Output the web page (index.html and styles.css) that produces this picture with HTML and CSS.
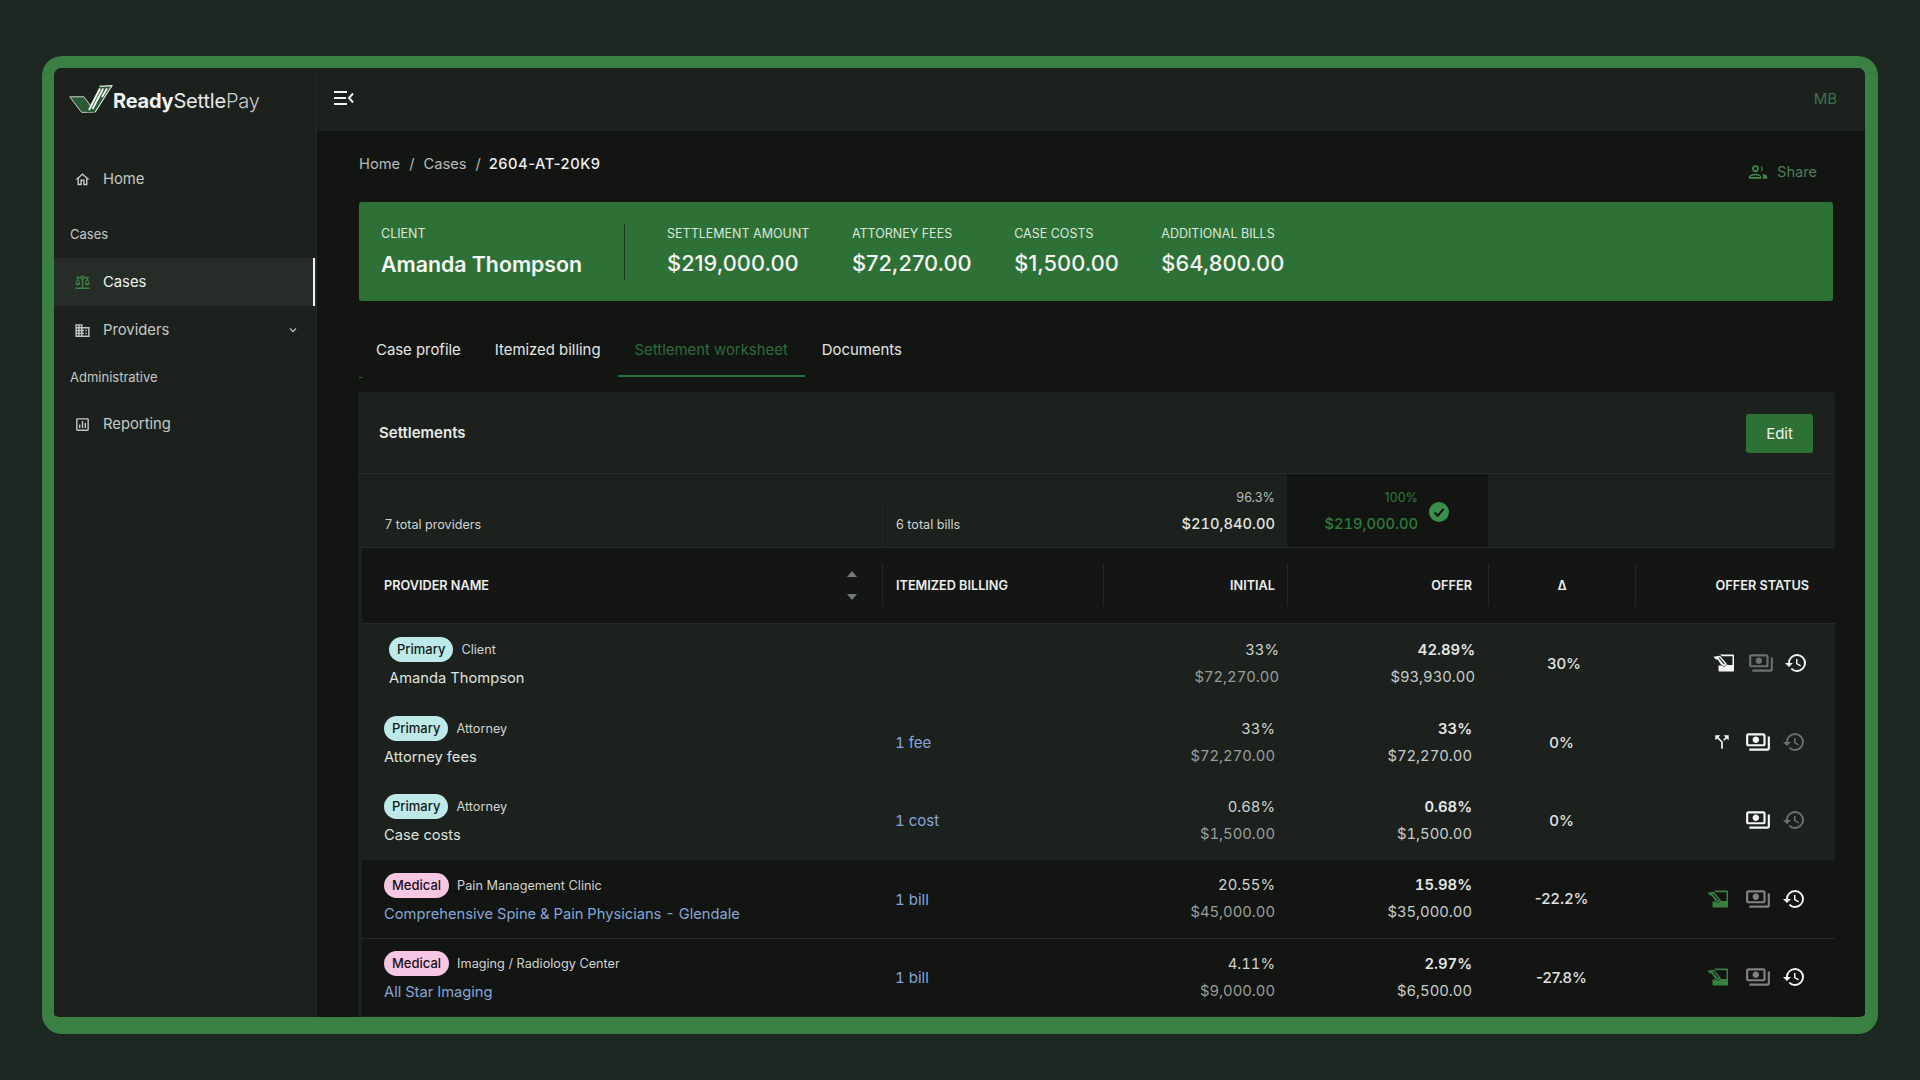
FILE: index.html
```html
<!DOCTYPE html>
<html lang="en">
<head>
<meta charset="utf-8">
<title>ReadySettlePay</title>
<link rel="stylesheet" href="styles.css">
</head>
<body>
<svg class="defs" aria-hidden="true">
  <symbol id="i-history" viewBox="0 0 24 24"><path fill="currentColor" d="M13 3a9 9 0 0 0-9 9H1l3.89 3.89.07.14L9 12H6c0-3.87 3.13-7 7-7s7 3.13 7 7-3.13 7-7 7c-1.93 0-3.68-.79-4.94-2.06l-1.42 1.42A8.954 8.954 0 0 0 13 21a9 9 0 0 0 0-18zm-1 5v5l4.28 2.54.72-1.21-3.5-2.08V8H12z"/></symbol>
  <symbol id="i-money" viewBox="0 0 24 24"><path fill="currentColor" d="M19 14V6c0-1.1-.9-2-2-2H3c-1.1 0-2 .9-2 2v8c0 1.1.9 2 2 2h14c1.1 0 2-.9 2-2zm-2 0H3V6h14v8zm-7-7c-1.66 0-3 1.34-3 3s1.34 3 3 3 3-1.34 3-3-1.34-3-3-3zm13 0v11c0 1.1-.9 2-2 2H4v-2h17V7h2z"/></symbol>
  <symbol id="i-fork" viewBox="0 0 24 24"><path fill="currentColor" d="M14 4l2.29 2.29-2.88 2.88 1.42 1.42 2.88-2.88L20 10V4h-6zm-4 0H4v6l2.29-2.29 4.71 4.7V20h2v-8.41l-5.29-5.3L10 4z"/></symbol>
  <symbol id="i-sign" viewBox="0 0 22 18"><path fill="currentColor" d="M7 .4h13.200a.8.8 0 0 1 .8.8v15.600a.8.8 0 0 1-.8.8H6.500a1 1 0 0 1-1-1v-5h3.300l2.400 1.500 2.900-2.800.7.7h4.700V2.300H8.800L7 .4z"/><path fill="currentColor" fill-rule="evenodd" d="M.3 2.700 7 1.700l6.800 8.200-2.600 2.500-3.400-2.100-3.100-4.800-1.600.1L.3 2.700zm5 .9 5.700 7 .8-.8-5.200-6.400-1.300.2z"/></symbol>
</svg>
<div class="frame">
  <aside class="sidebar">
    <div class="logo">
      <svg class="logo-mark" viewBox="0 0 44 28" aria-hidden="true">
        <path d="M.8 11.800h14l5.600 7.200 4.500 8.300H12.500z" fill="#2b5b35" stroke="#dfe4df" stroke-width=".9"/>
        <path d="M30.500 1.400 43 .6 26 27.300H17.800z" fill="#2b5b35"/>
        <path d="M30.500 1.400 43 .6 26 27.300" fill="none" stroke="#e8ece8" stroke-width="1.100"/>
        <path d="M31 3.500 20 25M34.200 3.500 23.500 24M38 3.500 33 12" fill="none" stroke="#f2f5f2" stroke-width="1.900"/>
      </svg>
      <span class="logo-text"><b>Ready</b><span class="reg">Settle</span><span class="lt">Pay</span></span>
    </div>
    <nav class="nav">
      <a class="nav-item">
        <svg class="nav-ico" viewBox="0 0 24 24"><path fill="currentColor" d="M12 5.690l5 4.500V18h-2v-6H9v6H7v-7.810l5-4.500M12 3L2 12h3v8h6v-6h2v6h6v-8h3L12 3z"/></svg>
        <span>Home</span>
      </a>
      <div class="nav-label first">Cases</div>
      <a class="nav-item active">
        <svg class="nav-ico green" viewBox="0 0 24 24"><path fill="currentColor" d="M13 7.830c.85-.3 1.530-.98 1.830-1.830H18l-3 7c0 1.660 1.570 3 3.500 3s3.500-1.340 3.500-3l-3-7h2V4h-6.170c-.41-1.170-1.520-2-2.830-2s-2.420.83-2.830 2H3v2h2l-3 7c0 1.660 1.570 3 3.500 3S9 14.660 9 13L6 6h3.170c.3.85.98 1.530 1.830 1.830V19H2v2h20v-2h-9V7.830zM20.370 13h-3.740l1.870-4.360L20.370 13zm-13 0H3.630L5.500 8.640 7.370 13zM12 6c-.55 0-1-.45-1-1s.45-1 1-1 1 .45 1 1-.45 1-1 1z"/></svg>
        <span class="strong">Cases</span>
      </a>
      <a class="nav-item">
        <svg class="nav-ico" viewBox="0 0 24 24"><path fill="currentColor" d="M12 7V3H2v18h20V7H12zM6 19H4v-2h2v2zm0-4H4v-2h2v2zm0-4H4V9h2v2zm0-4H4V5h2v2zm4 12H8v-2h2v2zm0-4H8v-2h2v2zm0-4H8V9h2v2zm0-4H8V5h2v2zm10 12h-8v-2h2v-2h-2v-2h2v-2h-2V9h8v10zm-2-8h-2v2h2v-2zm0 4h-2v2h2v-2z"/></svg>
        <span>Providers</span>
        <svg class="chev" viewBox="0 0 10 6"><path d="M2 1.500 5 4.500 8 1.500" fill="none" stroke="currentColor" stroke-width="1.400"/></svg>
      </a>
      <div class="nav-label">Administrative</div>
      <a class="nav-item">
        <svg class="nav-ico" viewBox="0 0 24 24"><path fill="currentColor" d="M19 3H5c-1.100 0-2 .9-2 2v14c0 1.100.9 2 2 2h14c1.100 0 2-.9 2-2V5c0-1.100-.9-2-2-2zm0 16H5V5h14v14zM7 12h2v5H7zm4-5h2v10h-2zm4 3h2v7h-2z"/></svg>
        <span>Reporting</span>
      </a>
    </nav>
  </aside>
  <div class="main">
    <header class="topbar">
      <svg class="menu" viewBox="0 0 20 16" aria-hidden="true"><path d="M0 2h13M0 8h12M0 14h13M19 3.500 15 8l4 4.500" fill="none" stroke="#f2f4f2" stroke-width="2"/></svg>
      <span class="user">MB</span>
    </header>
    <div class="content">
      <div class="crumbs-row">
        <div class="crumbs"><span>Home</span><i>/</i><span>Cases</span><i>/</i><b>2604-AT-20K9</b></div>
        <div class="share">
          <svg class="share-ico" viewBox="0 0 24 24"><path fill="currentColor" d="M9 4a4 4 0 1 1 0 8 4 4 0 0 1 0-8zm0 2a2 2 0 1 0 0 4 2 2 0 0 0 0-4zM15 4.200a4 4 0 0 1 0 7.600c.8-1 1.200-2.300 1.200-3.800S15.800 5.200 15 4.200zM9 14c3.700 0 7 1.700 7 4v2H1v-2c0-2.300 4.300-4 8-4zm0 2c-2.700 0-5.300 1-6 2h12c-.7-1-3.300-2-6-2zM17 14.200c3 .4 6 1.700 6 3.800v2h-5v-2.500c0-1.300-.4-2.400-1-3.300z"/></svg>
          <span>Share</span>
        </div>
      </div>
      <section class="summary-card">
        <div class="client-block">
          <div class="stat-label">CLIENT</div>
          <div class="client-name">Amanda Thompson</div>
        </div>
        <div class="stats">
          <div><div class="stat-label">SETTLEMENT AMOUNT</div><div class="stat-value">$219,000.00</div></div>
          <div><div class="stat-label">ATTORNEY FEES</div><div class="stat-value">$72,270.00</div></div>
          <div><div class="stat-label">CASE COSTS</div><div class="stat-value">$1,500.00</div></div>
          <div><div class="stat-label">ADDITIONAL BILLS</div><div class="stat-value">$64,800.00</div></div>
        </div>
      </section>
      <nav class="tabs">
        <a class="tab">Case profile</a>
        <a class="tab">Itemized billing</a>
        <a class="tab active">Settlement worksheet</a>
        <a class="tab">Documents</a>
      </nav>
      <section class="panel">
        <div class="panel-head">
          <h2>Settlements</h2>
          <button class="btn">Edit</button>
        </div>
        <div class="trow totals">
          <div class="tot first">7 total providers</div>
          <div class="tot sep">6 total bills</div>
          <div class="tot num sep"><span class="small">96.3%</span><b>$210,840.00</b></div>
          <div class="tot-offer">
            <div class="tot num"><span class="small">100%</span><b>$219,000.00</b></div>
            <svg class="ok" viewBox="0 0 20 20" aria-hidden="true"><circle cx="10" cy="10" r="10" fill="#3a8f4a"/><path d="M5.500 10.500 8.700 13.700 14.700 6.800" fill="none" stroke="#10140f" stroke-width="2"/></svg>
          </div>
        </div>
        <div class="trow thead">
          <div class="th first">PROVIDER NAME
            <span class="sort"><svg viewBox="0 0 10 6"><path d="M5 0 10 6H0z"/></svg><svg viewBox="0 0 10 6"><path d="M0 0H10L5 6z"/></svg></span>
          </div>
          <div class="th sep">ITEMIZED BILLING</div>
          <div class="th sep end">INITIAL</div>
          <div class="th sep end offer">OFFER</div>
          <div class="th sep mid">Δ</div>
          <div class="th sep end status">OFFER STATUS</div>
        </div>

        <div class="trow row row-client">
          <div class="td name"><div class="tags"><span class="badge primary">Primary</span><span class="kind">Client</span></div><div class="who">Amanda Thompson</div></div>
          <div class="td"></div>
          <div class="td num"><span>33%</span><span class="dim">$72,270.00</span></div>
          <div class="td num offer"><b>42.89%</b><span>$93,930.00</span></div>
          <div class="td delta">30%</div>
          <div class="td icons">
            <svg class="ico sign"><use href="#i-sign"/></svg>
            <svg class="ico money off"><use href="#i-money"/></svg>
            <svg class="ico hist"><use href="#i-history"/></svg>
          </div>
        </div>

        <div class="trow row">
          <div class="td name"><div class="tags"><span class="badge primary">Primary</span><span class="kind">Attorney</span></div><div class="who">Attorney fees</div></div>
          <div class="td"><a class="link">1 fee</a></div>
          <div class="td num"><span>33%</span><span class="dim">$72,270.00</span></div>
          <div class="td num offer"><b>33%</b><span>$72,270.00</span></div>
          <div class="td delta">0%</div>
          <div class="td icons">
            <svg class="ico fork"><use href="#i-fork"/></svg>
            <svg class="ico money"><use href="#i-money"/></svg>
            <svg class="ico hist off"><use href="#i-history"/></svg>
          </div>
        </div>

        <div class="trow row">
          <div class="td name"><div class="tags"><span class="badge primary">Primary</span><span class="kind">Attorney</span></div><div class="who">Case costs</div></div>
          <div class="td"><a class="link">1 cost</a></div>
          <div class="td num"><span>0.68%</span><span class="dim">$1,500.00</span></div>
          <div class="td num offer"><b>0.68%</b><span>$1,500.00</span></div>
          <div class="td delta">0%</div>
          <div class="td icons">
            <svg class="ico money"><use href="#i-money"/></svg>
            <svg class="ico hist off"><use href="#i-history"/></svg>
          </div>
        </div>

        <div class="trow row dark">
          <div class="td name"><div class="tags"><span class="badge medical">Medical</span><span class="kind">Pain Management Clinic</span></div><a class="link who">Comprehensive Spine &amp; Pain Physicians - Glendale</a></div>
          <div class="td"><a class="link">1 bill</a></div>
          <div class="td num"><span>20.55%</span><span class="dim">$45,000.00</span></div>
          <div class="td num offer"><b>15.98%</b><span>$35,000.00</span></div>
          <div class="td delta">-22.2%</div>
          <div class="td icons">
            <svg class="ico sign on"><use href="#i-sign"/></svg>
            <svg class="ico money off2"><use href="#i-money"/></svg>
            <svg class="ico hist"><use href="#i-history"/></svg>
          </div>
        </div>

        <div class="trow row dark lined">
          <div class="td name"><div class="tags"><span class="badge medical">Medical</span><span class="kind">Imaging / Radiology Center</span></div><a class="link who">All Star Imaging</a></div>
          <div class="td"><a class="link">1 bill</a></div>
          <div class="td num"><span>4.11%</span><span class="dim">$9,000.00</span></div>
          <div class="td num offer"><b>2.97%</b><span>$6,500.00</span></div>
          <div class="td delta">-27.8%</div>
          <div class="td icons">
            <svg class="ico sign on"><use href="#i-sign"/></svg>
            <svg class="ico money off2"><use href="#i-money"/></svg>
            <svg class="ico hist"><use href="#i-history"/></svg>
          </div>
        </div>
      </section>
    </div>
  </div>
</div>
</body>
</html>
```

FILE: styles.css
```css
* { box-sizing: border-box; }
html, body { margin: 0; height: 100%; }
body {
  background: #1e2823;
  font-family: Inter, "Liberation Sans", sans-serif;
  color: #e6e9e6;
  overflow: hidden;
  padding: 56px 0 0 42px;
}
.defs { display: none; }
a { color: inherit; text-decoration: none; }
h2 { margin: 0; }

.frame {
  width: 1836px;
  height: 978px;
  border: solid #3a8043;
  border-width: 12px 13px 17px 12px;
  border-radius: 20px;
  overflow: hidden;
  display: grid;
  grid-template-columns: 263px 1fr;
  background: #121512;
}

/* sidebar */
.sidebar { background: #1c211e; border-right: 1px solid #242926; padding-top: 17px; }
.logo { display: flex; align-items: center; padding-left: 15px; height: 28px; }
.logo-mark { width: 44px; height: 28px; flex: none; }
.logo-text { font-size: 20px; letter-spacing: -.2px; color: #f2f4f2; position: relative; top: 2px; }
.logo-text b { font-weight: 700; }
.logo-text .reg { font-weight: 400; color: #e8ebe8; }
.logo-text .lt { font-weight: 300; color: #c8ccc8; }
.nav { margin-top: 42px; }
.nav-item {
  display: flex;
  align-items: center;
  height: 48px;
  padding-left: 20px;
  gap: 12px;
  font-size: 14.8px;
  color: #c4c8c5;
  position: relative;
}
.nav-item.active { background: #262c28; }
.nav-item.active::after {
  content: "";
  position: absolute;
  right: 1px;
  top: 0;
  bottom: 0;
  width: 2px;
  background: #f2f4f2;
}
.strong { color: #eef0ee; }
.nav-ico { width: 17px; height: 17px; flex: none; color: #c4c8c5; }
.nav-ico.green { color: #3a8043; }
.chev { width: 10px; height: 6px; margin-left: auto; margin-right: 18px; color: #b4b8b5; }
.nav-label { font-size: 13px; line-height: 16px; color: #c4c8c5; padding: 15px 0 15px 16px; }
.nav-label.first { padding: 23px 0 16px 16px; }

/* main */
.main { display: flex; flex-direction: column; min-width: 0; overflow: hidden; }
.topbar {
  height: 63px;
  flex: none;
  background: #1c211e;
  display: flex;
  align-items: center;
  justify-content: space-between;
  padding: 0 28px 3px 17px;
}
.menu { width: 20px; height: 16px; }
.user { font-size: 15px; color: #3f6f4a; }
.content { padding: 0 32px 0 42px; flex: 1; min-height: 0; }
.crumbs-row { height: 71px; display: flex; justify-content: space-between; align-items: flex-start; }
.crumbs { margin-top: 24px; font-size: 14.7px; line-height: 18px; color: #b8bcb9; display: flex; gap: 9px; }
.crumbs i { font-style: normal; }
.crumbs b { font-weight: 500; color: #eef0ee; letter-spacing: .5px; margin-left: -1px; }
.share { margin-top: 31px; margin-right: 16px; display: flex; align-items: center; gap: 9px; font-size: 14.6px; line-height: 18px; color: #4f7d59; }
.share-ico { width: 20px; height: 20px; color: #3f8a4b; }

.summary-card {
  height: 99px;
  background: #2e7136;
  border-radius: 3px;
  display: flex;
  align-items: center;
  padding-left: 22px;
}
.client-block { height: 56px; padding-right: 42px; border-right: 1px solid #173a1d; margin-right: 42px; }
.stat-label { font-size: 12.5px; line-height: 16px; margin-top: 2px; color: #dbe7dc; }
.client-name { font-size: 21.3px; font-weight: 600; line-height: 28px; color: #f6f8f6; margin-top: 8px; }
.stats { display: flex; gap: 42.5px; height: 56px; }
.stat-value { font-size: 21.8px; font-weight: 500; line-height: 28px; color: #f2f5f2; margin-top: 7px; }

.tabs { display: flex; margin-top: 24px; height: 52px; position: relative; }
.tabs::after { content: ""; position: absolute; left: 0; bottom: -1px; width: 3px; height: 1px; background: #2e7136; }
.tab {
  padding: 15px 17px 0;
  font-size: 14.9px;
  line-height: 20px;
  color: #e3e6e3;
  border-bottom: 2px solid transparent;
}
.tab.active { color: #2f6a3a; border-bottom-color: #2e7136; }

.panel {
  margin: 15px -2px 0 -1px;
  padding-left: 4px;
  background: #1c211e;
  border-radius: 4px 4px 0 0;
  height: 640px;
}
.panel-head {
  height: 82px;
  margin-left: -4px;
  display: flex;
  align-items: center;
  justify-content: space-between;
  padding: 0 22px 0 21px;
  border-bottom: 1px solid #262b28;
}
.panel-head h2 { font-size: 15px; font-weight: 600; color: #e6e9e6; }
.btn {
  width: 67px;
  height: 39px;
  margin-top: 2px;
  border: 0;
  border-radius: 3px;
  background: #2e7136;
  color: #f0f5f0;
  font: 400 15px Inter, sans-serif;
}

.trow { display: grid; grid-template-columns: 520px 221px 184px 201px 147px 200px; }
.totals { height: 74px; border-bottom: 1px solid #262b28; }
.tot { font-size: 12.6px; color: #d0d4d1; align-self: end; padding-bottom: 15px; }
.tot.first { padding-left: 23px; }
.tot.sep { border-left: 1px solid #232825; padding-left: 13px; height: 50px; display: flex; align-items: flex-end; }
.tot.num { display: flex; flex-direction: column; align-items: flex-end; gap: 8px; padding: 0 12px 13px 0; height: auto; border: 0; }
.tot .small { line-height: 16px; color: #b8bcb9; }
.tot b { font-size: 14.7px; font-weight: 500; line-height: 20px; color: #dfe2df; font-variant-numeric: tabular-nums; }
.tot-offer { background: #121512; display: flex; justify-content: flex-end; align-items: flex-end; padding-right: 58px; position: relative; grid-column: 4; }
.tot-offer .tot { padding-bottom: 13px; }
.tot-offer .small, .tot-offer b { color: #2f7a3b; }
.tot-offer .ok { width: 20px; height: 20px; position: absolute; left: 142px; top: 28px; }

.thead { height: 75.5px; background: #141614; border-bottom: 1px solid #262b28; align-items: center; }
.th { font-size: 12.7px; font-weight: 600; color: #eceeec; height: 42px; display: flex; align-items: center; padding: 0 13px; }
.th.first { padding-left: 22px; justify-content: space-between; padding-right: 25px; }
.th.sep { border-left: 1px solid #232825; }
.th.end { justify-content: flex-end; padding-right: 12px; }
.th.offer { padding-right: 16px; }
.th.status { padding-right: 26px; }
.th.mid { justify-content: center; }
.sort { display: flex; flex-direction: column; gap: 17px; }
.sort svg { width: 10px; height: 6px; fill: #777b78; display: block; }

.row { height: 78.1px; align-items: center; border-bottom: 1px solid #1f2421; }
.row-client { height: 80px; }
.row.dark { background: #121512; border-bottom: 0; }
.row.lined { border-top: 1px solid #262b28; }
.td { min-width: 0; }
.td.name { padding-left: 22px; }
.tags { display: flex; align-items: center; gap: 8px; height: 25px; }
.badge { height: 25px; line-height: 25px; padding: 0 8px; border-radius: 12.5px; font-size: 13px; font-weight: 500; color: #111a1a; }
.badge.primary { background: #bdeae8; }
.badge.medical { background: #f6c6e3; color: #1a1116; }
.kind { font-size: 12.7px; color: #d0d4d1; }
.who { display: block; font-size: 14.7px; line-height: 22px; margin-top: 5px; color: #dfe2df; white-space: nowrap; }
.link { color: #86a6d8; font-size: 15px; font-variant-numeric: tabular-nums; }
.link.who { font-size: 14.7px; }
.td .link:not(.who) { padding-left: 13px; }
.td.num { display: flex; flex-direction: column; align-items: flex-end; gap: 5px; padding-right: 12px; font-size: 14.8px; line-height: 22px; color: #cfd3d0; font-variant-numeric: tabular-nums; }
.td.num .dim { color: #999d9a; }
.td.num.offer { padding-right: 16px; color: #c8ccc9; }
.td.num b { font-weight: 600; color: #e6e9e6; }
.td.delta { text-align: center; font-size: 15px; font-weight: 500; color: #e0e3e0; }
.td.icons { display: flex; justify-content: flex-end; align-items: center; gap: 11px; padding-right: 29px; color: #fff; }
.ico { display: block; flex: none; color: #f5f6f5; }
.sign { width: 22px; height: 18px; margin-right: 5px; }
.sign.on { color: #3a8043; }
.money { width: 26px; height: 26px; }
.hist { width: 24px; height: 24px; }
.fork { width: 20px; height: 20px; margin-right: 2px; }
.ico.off { color: #6d706e; }
.ico.off2 { color: #7f8280; }

.row-client .td.name { padding-left: 27px; }
.row-client .td.num { padding-right: 8px; }
.row-client .td.num.offer { padding-right: 13px; }
.row-client .td.delta { padding-left: 5px; }
.row-client .td.icons { padding-right: 27px; gap: 10px; }
.row-client .sign { margin-right: 3px; }
```
